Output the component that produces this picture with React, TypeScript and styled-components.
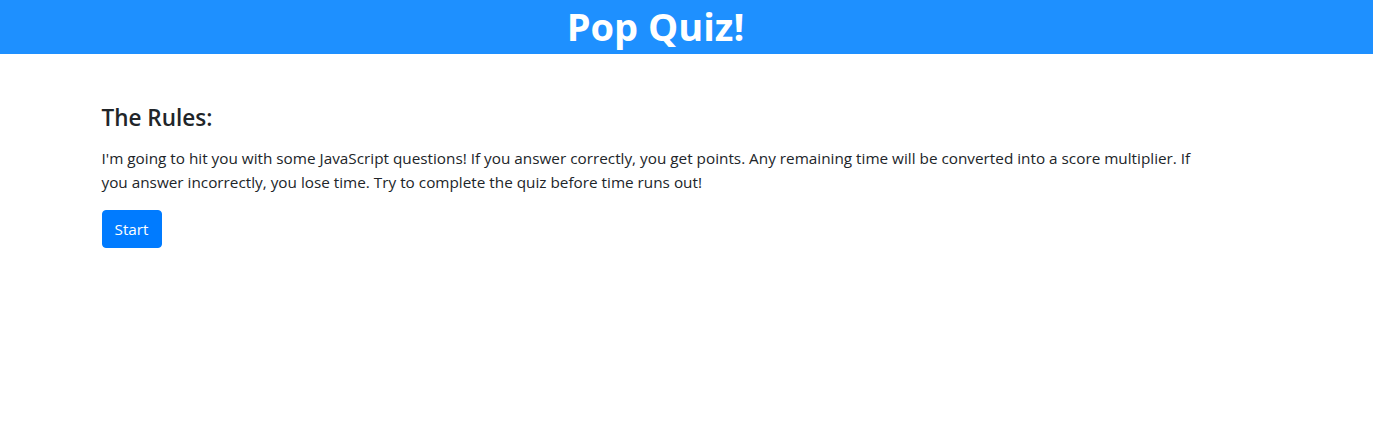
import React from "react";
import styled, { createGlobalStyle } from "styled-components";

const GlobalStyle = createGlobalStyle`
  html, body { margin: 0; padding: 0; background: #fff; }
  body {
    font-family: "Open Sans", "Noto Sans", "Liberation Sans", sans-serif;
    color: #212529;
    font-size: 16px;
    line-height: 1.5;
  }
  * { box-sizing: border-box; }
`;

const Header = styled.header`
  height: 54px;
  background: #1e90ff;
  display: flex;
  align-items: center;
  justify-content: center;
  padding-right: 62px;
`;

const Title = styled.h1`
  margin: 0;
  color: #fff;
  font-size: 38px;
  font-weight: 700;
  line-height: 1.2;
`;

const Main = styled.main`
  max-width: 1200px;
  margin: 0 auto;
  padding: 50px 15px 0;
`;

const Heading = styled.h3`
  margin: 0 0 15px;
  font-size: 22.5px;
  font-weight: 600;
  line-height: 1.2;
  color: #212529;
`;

const Text = styled.p`
  margin: 0 0 16px;
  max-width: 1105px;
  font-size: 15.3px;
  line-height: 24px;
`;

const Button = styled.button`
  font-family: inherit;
  font-size: 15.3px;
  line-height: 24px;
  padding: 6px 12px;
  color: #fff;
  background: #007bff;
  border: 1px solid #007bff;
  border-radius: 4px;
  cursor: pointer;
`;

export default function App() {
  return (
    <>
      <GlobalStyle />
      <Header>
        <Title>Pop Quiz!</Title>
      </Header>
      <Main>
        <Heading>The Rules:</Heading>
        <Text>
          I'm going to hit you with some JavaScript questions! If you answer correctly, you get points. Any remaining time will be converted into a score multiplier. If you answer incorrectly, you lose time. Try to complete the quiz before time runs out!
        </Text>
        <Button>Start</Button>
      </Main>
    </>
  );
}
